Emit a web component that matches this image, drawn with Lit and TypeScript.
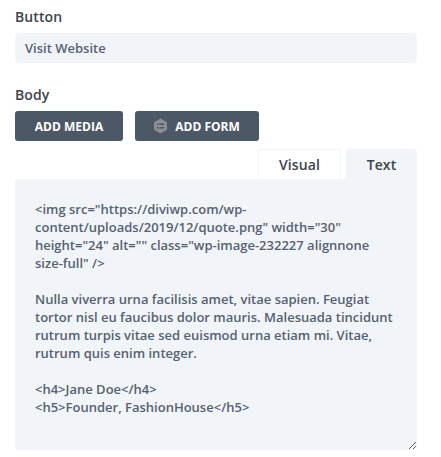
import { LitElement, html, css } from "lit";
import { customElement } from "lit/decorators.js";

const BODY = `<img src="https://diviwp.com/wp-content/uploads/2019/12/quote.png" width="30" height="24" alt="" class="wp-image-232227 alignnone size-full" />

Nulla viverra urna facilisis amet, vitae sapien. Feugiat tortor nisl eu faucibus dolor mauris. Malesuada tincidunt rutrum turpis vitae sed euismod urna etiam mi. Vitae, rutrum quis enim integer.

<h4>Jane Doe</h4>
<h5>Founder, FashionHouse</h5>`;

@customElement("app-root")
export class AppRoot extends LitElement {
  static styles = css`
    :host {
      display: block;
      width: 441px;
      height: 457px;
      overflow: hidden;
      background: #fff;
      font-family: "Open Sans", sans-serif;
      box-sizing: border-box;
      padding: 7px 24px 0 15px;
    }
    .label {
      font-size: 14px;
      font-weight: 600;
      line-height: 19px;
      color: #3d444b;
      letter-spacing: 0.1px;
    }
    .field {
      margin-top: 7px;
      height: 30px;
      box-sizing: border-box;
      background: #f1f5f9;
      border-radius: 3px;
      padding: 0 10px;
      display: flex;
      align-items: center;
      font-size: 13px;
      font-weight: 600;
      color: #566170;
    }
    .body-label {
      margin-top: 22px;
    }
    .buttons {
      display: flex;
      gap: 12px;
      margin-top: 7px;
    }
    .btn {
      height: 30px;
      border-radius: 3px;
      background: #4c5866;
      color: #fff;
      display: flex;
      align-items: center;
      justify-content: center;
      font-size: 12px;
      font-weight: 700;
      box-sizing: border-box;
    }
    .media {
      width: 108px;
    }
    .form {
      width: 124px;
      gap: 7px;
      padding-right: 1px;
    }
    .form svg {
      width: 15px;
      height: 16px;
      flex: none;
    }
    .tabs {
      display: flex;
      justify-content: flex-end;
      gap: 5px;
      margin-top: 8px;
      height: 30px;
    }
    .tab {
      height: 30px;
      box-sizing: border-box;
      display: flex;
      align-items: center;
      justify-content: center;
      font-size: 14px;
      font-weight: 600;
      letter-spacing: 0.1px;
      color: #3d444b;
      border-radius: 3px 3px 0 0;
    }
    .visual {
      width: 83px;
      background: #fff;
      border: 1px solid #f1f5f9;
      border-bottom: 0;
    }
    .text {
      width: 71px;
      background: #f1f5f9;
    }
    textarea {
      display: block;
      width: 402px;
      height: 271px;
      margin: 0;
      box-sizing: border-box;
      border: 0;
      outline: 0;
      background: #f1f5f9;
      border-radius: 3px 0 3px 3px;
      padding: 21px 20px;
      font-family: "Open Sans", sans-serif;
      font-size: 13px;
      font-weight: 600;
      line-height: 18px;
      color: #566170;
      resize: vertical;
      overflow: hidden;
    }
  `;

  render() {
    return html`
      <div class="label">Button</div>
      <div class="field">Visit Website</div>
      <div class="label body-label">Body</div>
      <div class="buttons">
        <div class="btn media">ADD MEDIA</div>
        <div class="btn form">
          <svg viewBox="0 0 15 16" aria-hidden="true">
            <path d="M7.5 .6 13.6 4.1a.8.8 0 0 1 .4.7v6.400a.8.8 0 0 1-.4.7L7.500 15.400 1.400 11.900a.8.8 0 0 1-.4-.7V4.800a.8.8 0 0 1 .4-.7z" fill="#8b8f94" />
            <rect x="4" y="5.400" width="1.600" height="1.600" fill="#4c5866" />
            <rect x="6.500" y="5.400" width="4.600" height="1.600" fill="#4c5866" />
            <rect x="4" y="9" width="1.600" height="1.600" fill="#4c5866" />
            <rect x="6.500" y="9" width="4.600" height="1.600" fill="#4c5866" />
          </svg>
          <span>ADD FORM</span>
        </div>
      </div>
      <div class="tabs">
        <div class="tab visual">Visual</div>
        <div class="tab text">Text</div>
      </div>
      <textarea .value=${BODY} spellcheck="false"></textarea>
    `;
  }
}
